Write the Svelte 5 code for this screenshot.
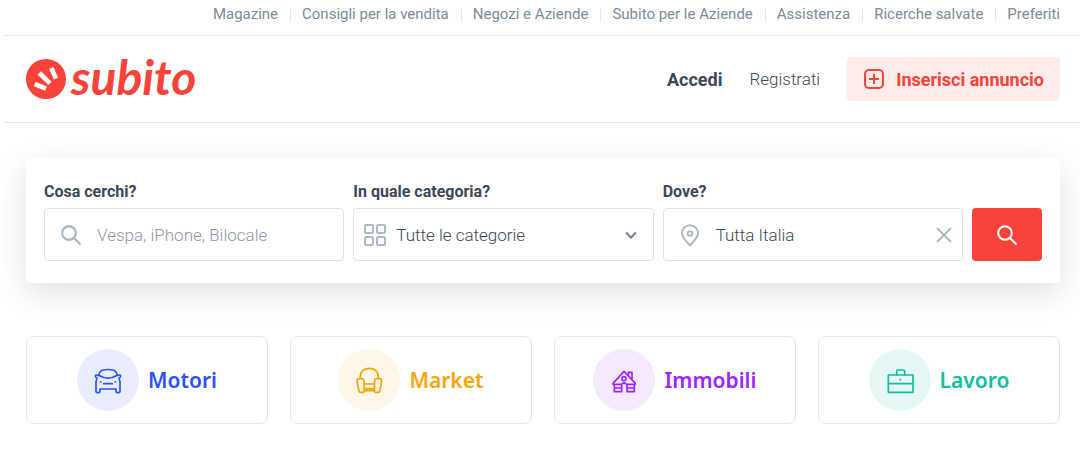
<script lang="ts">
  const links = [
    'Magazine',
    'Consigli per la vendita',
    'Negozi e Aziende',
    'Subito per le Aziende',
    'Assistenza',
    'Ricerche salvate',
    'Preferiti'
  ];

  const categories = [
    { id: 'motori', label: 'Motori' },
    { id: 'market', label: 'Market' },
    { id: 'immobili', label: 'Immobili' },
    { id: 'lavoro', label: 'Lavoro' }
  ];

  let query = $state('');
  let category = $state('all');
  let place = $state('Tutta Italia');
</script>

{#snippet searchIcon()}
  <svg class="icon" viewBox="0 0 24 24" aria-hidden="true">
    <circle cx="10" cy="10" r="6.8" />
    <path d="M15 15l6.500 6.500" />
  </svg>
{/snippet}

<div class="page">
  <nav class="top-nav">
    {#each links as link}
      <a href="#top">{link}</a>
    {/each}
  </nav>

  <header class="header">
    <a class="logo" href="#home">
      <svg viewBox="0 0 120 120" aria-hidden="true">
        <circle cx="60" cy="60" r="60" fill="#f9423a" />
        <g stroke="#fff" stroke-width="14">
          <path d="M26 75l34 14" />
          <path d="M40 42l32 31" />
          <path d="M76 27l14 32" />
        </g>
      </svg>
      <span>subito</span>
    </a>
    <div class="account">
      <a class="login" href="#login">Accedi</a>
      <a class="register" href="#register">Registrati</a>
      <button class="insert" type="button">
        <svg viewBox="0 0 20 20" aria-hidden="true">
          <rect x="1" y="1" width="18" height="18" rx="4" />
          <path d="M10 5v10M5 10h10" />
        </svg>
        Inserisci annuncio
      </button>
    </div>
  </header>

  <main>
    <form class="search" onsubmit={(e) => e.preventDefault()}>
      <div class="field">
        <label for="query">Cosa cerchi?</label>
        <div class="control">
          {@render searchIcon()}
          <input id="query" type="text" placeholder="Vespa, iPhone, Bilocale" bind:value={query} />
        </div>
      </div>

      <div class="field">
        <label for="category">In quale categoria?</label>
        <div class="control compact">
          <svg class="grid-icon" viewBox="0 0 22 22" aria-hidden="true">
            <rect x="1" y="1" width="8" height="8" rx="1" />
            <rect x="13" y="1" width="8" height="8" rx="1" />
            <rect x="1" y="13" width="8" height="8" rx="1" />
            <rect x="13" y="13" width="8" height="8" rx="1" />
          </svg>
          <select id="category" bind:value={category}>
            <option value="all">Tutte le categorie</option>
            {#each categories as c}
              <option value={c.id}>{c.label}</option>
            {/each}
          </select>
          <svg class="chevron" viewBox="0 0 16 16" aria-hidden="true">
            <path d="M3 5.5l5 5 5-5" />
          </svg>
        </div>
      </div>

      <div class="field">
        <label for="place">Dove?</label>
        <div class="control">
          <svg class="icon pin" viewBox="0 0 24 24" aria-hidden="true">
            <path d="M12 22.400C8.500 18.600 4 14.600 4 10.200a8 8 0 0 1 16 0c0 4.400-4.500 8.400-8 12.200z" />
            <circle cx="12" cy="10.500" r="2.300" />
          </svg>
          <input id="place" type="text" bind:value={place} />
          <button class="clear" type="button" aria-label="Cancella" onclick={() => (place = '')}>
            <svg viewBox="0 0 16 16" aria-hidden="true">
              <path d="M1 1l14 14M15 1L1 15" />
            </svg>
          </button>
        </div>
      </div>

      <button class="submit" type="submit" aria-label="Cerca">
        {@render searchIcon()}
      </button>
    </form>

    <div class="categories">
      {#each categories as c}
        <a class="card {c.id}" href="#{c.id}">
          <span class="badge">
            <svg viewBox="0 0 186 186" aria-hidden="true">
              {#if c.id === 'motori'}
                <path d="M65 79C68 68 72 64 78 63Q93 60 108 63C114 64 118 68 121 79Q93 96 65 79z" />
                <path d="M65 79l-9-1q-3 6 4 9l-3 12v28q0 4 4 4h4q4 0 4-5v-6h48v6q0 5 4 5h4q4 0 4-4V99l-3-12q7-3 4-9l-9 1" />
                <path d="M80 104h26M70 99h2M114 99h2" />
              {:else if c.id === 'market'}
                <path d="M67 87V82C67 50 121 50 121 82V87" />
                <path d="M78 95q-1-6-6-6h-8q-7 0-7 7l6 31q1 3 4 3h9q3 0 3-3z" />
                <path d="M110 95q1-6 6-6h8q7 0 7 7l-6 31q-1 3-4 3h-9q-3 0-3-3z" />
                <path d="M79 105h30M79 119h30M79 125h30" />
              {:else if c.id === 'immobili'}
                <path d="M60 103L93 67l34 36" />
                <path d="M106 79V70h11v21" />
                <circle cx="93" cy="89" r="6" />
                <path d="M60 106h25q8-8 16 0h26M64 106v22h22v-20M102 108v20h22v-22M64 117h22M102 117h22" />
              {:else}
                <path d="M58 78h74v52H58zM58 104h74" />
                <path d="M83 77V67q0-4 4-4h16q4 0 4 4v10M94 91v2" />
              {/if}
            </svg>
          </span>
          {c.label}
        </a>
      {/each}
    </div>
  </main>
</div>

<style>
  :global(body) {
    background: #fff;
    color: #3c4858;
    font-family: Roboto, 'Liberation Sans', sans-serif;
  }

  .page {
    padding-left: 4px;
  }

  a {
    color: inherit;
    text-decoration: none;
  }

  button {
    border: none;
    cursor: pointer;
    font: inherit;
  }

  svg {
    display: block;
    flex-shrink: 0;
    fill: none;
    stroke: currentColor;
    stroke-width: 2;
  }

  .logo svg {
    stroke: none;
  }

  .top-nav {
    display: flex;
    justify-content: flex-end;
    padding: 5px 20px 11px;
    border-bottom: 1px solid #e2e4ee;
    color: #7c8b9a;
    font-size: 15px;
    line-height: 19px;
  }

  .top-nav a + a {
    margin-left: 12px;
    padding-left: 12px;
    background: linear-gradient(#e4e8f2, #e4e8f2) no-repeat left center / 1px 14px;
  }

  .header {
    display: flex;
    align-items: center;
    justify-content: space-between;
    padding: 21px 20px 21px 22px;
    border-bottom: 1px solid #e2e4ee;
  }

  .logo {
    display: flex;
    align-items: center;
    gap: 5px;
    color: #f9423a;
    font-family: Lato, sans-serif;
    font-size: 48px;
    font-style: italic;
    font-weight: 700;
    line-height: 40px;
  }

  .logo span {
    padding-bottom: 4px;
  }

  .logo svg {
    width: 40px;
    height: 40px;
  }

  .account {
    display: flex;
    align-items: center;
    gap: 27px;
    font-size: 18px;
  }

  .login {
    font-weight: 700;
  }

  .register {
    font-size: 17px;
    font-weight: 300;
  }

  .insert {
    display: flex;
    align-items: center;
    gap: 12px;
    height: 44px;
    padding: 0 16px 0 17px;
    border-radius: 4px;
    background: #feeceb;
    color: #f9423a;
    font-weight: 700;
  }

  .insert svg {
    width: 20px;
    height: 20px;
  }

  main {
    padding: 35px 20px 35px 22px;
  }

  .search {
    display: flex;
    align-items: flex-end;
    gap: 9px;
    padding: 24px 18px 22px;
    border-radius: 4px;
    background: #fff;
    box-shadow: 0 10px 32px rgba(0, 0, 0, 0.12);
  }

  .field {
    flex: 1;
    min-width: 0;
  }

  label {
    display: block;
    margin-bottom: 7px;
    font-size: 16px;
    font-weight: 700;
    line-height: 19px;
  }

  .control {
    display: flex;
    align-items: center;
    gap: 14px;
    height: 53px;
    box-sizing: border-box;
    padding: 0 10px 0 14px;
    border: 1px solid #dfe2ee;
    border-radius: 4px;
    color: #aebac7;
  }

  .compact {
    gap: 10px;
    padding: 0 14px 0 10px;
  }

  input,
  select {
    flex: 1;
    min-width: 0;
    padding: 0;
    border: none;
    outline: none;
    appearance: none;
    background: none;
    color: #3c4858;
    font-family: inherit;
    font-size: 17px;
    font-weight: 300;
  }

  input::placeholder {
    color: #8e97a8;
  }

  .icon {
    width: 24px;
    height: 24px;
  }

  .control .icon {
    stroke-width: 2.4;
  }

  .control .pin {
    stroke-width: 2;
  }

  .grid-icon {
    width: 22px;
    height: 22px;
  }

  .chevron {
    width: 16px;
    height: 16px;
    color: #6f7e90;
  }

  .clear {
    padding: 0;
    background: none;
    color: #aebac7;
  }

  .clear svg {
    width: 16px;
    height: 16px;
  }

  .submit {
    display: flex;
    align-items: center;
    justify-content: center;
    width: 70px;
    height: 53px;
    padding: 0;
    border-radius: 4px;
    background: #f9423a;
    color: #fff;
  }

  .categories {
    display: grid;
    grid-template-columns: repeat(4, 1fr);
    gap: 22px;
    margin-top: 53px;
  }

  .card {
    display: flex;
    align-items: center;
    justify-content: center;
    gap: 9px;
    padding: 12px;
    border: 1px solid #e1e5ee;
    border-radius: 8px;
    font-family: 'Noto Sans', 'Open Sans', sans-serif;
    font-size: 21px;
    font-weight: 600;
    line-height: 24px;
  }

  .badge {
    width: 62px;
    height: 62px;
    border-radius: 50%;
  }

  .badge svg {
    stroke-width: 5;
    stroke-linecap: round;
    stroke-linejoin: round;
  }

  .motori { color: #2b50ff; }
  .motori .badge { background: #e9edff; }
  .market { color: #f5a609; }
  .market .badge { background: #fef6e6; }
  .immobili { color: #9b26ff; }
  .immobili .badge { background: #f4e9ff; }
  .lavoro { color: #11bd9f; }
  .lavoro .badge { background: #e5f8f5; }
</style>
